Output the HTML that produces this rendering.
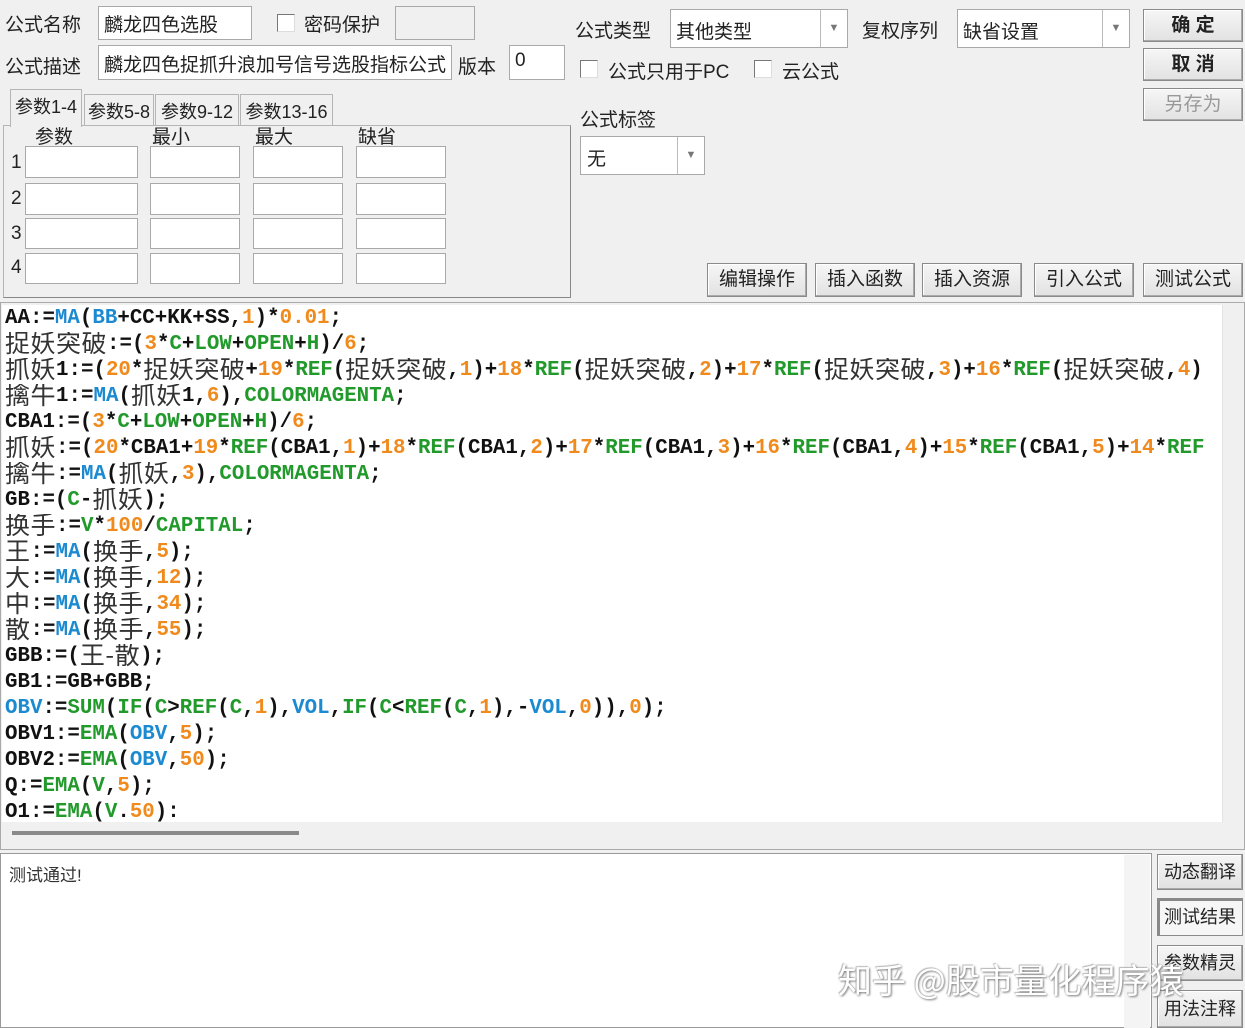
<!DOCTYPE html>
<html><head><meta charset="utf-8"><style>
*{box-sizing:border-box;margin:0;padding:0}
body{width:1245px;height:1028px;background:#f0f0f0;position:relative;overflow:hidden;font-family:"Liberation Sans","Noto Sans CJK SC",sans-serif;font-size:19px;color:#222}
.a{position:absolute;white-space:nowrap}
.in{position:absolute;background:#fff;border:1px solid #a9a9a9;white-space:nowrap}
.dis{background:#f0f0f0}
.cb{position:absolute;width:18px;height:18px;background:#fff;border:1px solid #777;border-right-color:#ddd;border-bottom-color:#ddd}
.btn{position:absolute;background:linear-gradient(#f6f6f6,#e2e2e2);border:1px solid #8a8a8a;box-shadow:inset -1px -1px 0 #aaa,inset 1px 1px 0 #fff;text-align:center;font-size:19px;color:#222;white-space:nowrap}
.dd{position:absolute;right:0;top:0;bottom:0;width:27px;border-left:1px solid #bbb;color:#777;font-size:11px;text-align:center}
.code{position:absolute;left:5px;display:flex;align-items:flex-start;font-family:"Liberation Mono",monospace;font-weight:bold;font-size:20.8px;line-height:26px;height:26px;white-space:pre;color:#111;overflow:hidden}
.code span{flex:none;line-height:26px;height:26px}
.b{color:#1c8ad0}.g{color:#219a2b}.o{color:#f08a1c}
.code .z{font-family:"Noto Sans CJK SC",sans-serif;font-weight:normal;font-size:25px;color:#333;letter-spacing:0.5px;position:relative;top:-3px}
.tab{position:absolute;top:92px;height:32px;border:1px solid #b5b5b5;border-bottom:none;font-size:18px;padding:3px 3px;white-space:nowrap;text-align:center}
</style></head><body>
<div class="a" style="left:5px;top:10px">公式名称</div>
<div class="in" style="left:98px;top:6px;width:154px;height:34px;padding:3px 5px">麟龙四色选股</div>
<div class="cb" style="left:277px;top:14px"></div>
<div class="a" style="left:304px;top:10px">密码保护</div>
<div class="in dis" style="top:6px;height:34px;left:395px;width:80px"></div>
<div class="a" style="left:5px;top:52px">公式描述</div>
<div class="in" style="left:98px;top:45px;width:354px;height:35px;padding:4px 5px;overflow:hidden">麟龙四色捉抓升浪加号信号选股指标公式</div>
<div class="a" style="left:458px;top:52px">版本</div>
<div class="in" style="left:509px;top:45px;width:56px;height:35px;padding:4px 5px">0</div>

<div class="tab" style="left:10px;width:72px;top:89px;height:38px;background:#f0f0f0;z-index:2">参数1-4</div>
<div class="tab" style="left:84px;width:70px;top:94px">参数5-8</div>
<div class="tab" style="left:155px;width:84px;top:94px">参数9-12</div>
<div class="tab" style="left:240px;width:93px;top:94px">参数13-16</div>
<div style="position:absolute;left:3px;top:125px;width:568px;height:173px;border:1px solid #b5b5b5;border-right-color:#888;border-bottom-color:#888"></div>
<div class="a" style="left:35px;top:122px">参数</div>
<div class="a" style="left:152px;top:122px">最小</div>
<div class="a" style="left:255px;top:122px">最大</div>
<div class="a" style="left:358px;top:122px">缺省</div>
<div class="a" style="left:11px;top:152px">1</div><div class="a" style="left:11px;top:188px">2</div><div class="a" style="left:11px;top:223px">3</div><div class="a" style="left:11px;top:257px">4</div>
<div class="in" style="left:25px;top:146px;width:113px;height:32px"></div><div class="in" style="left:150px;top:146px;width:90px;height:32px"></div><div class="in" style="left:253px;top:146px;width:90px;height:32px"></div><div class="in" style="left:356px;top:146px;width:90px;height:32px"></div>
<div class="in" style="left:25px;top:183px;width:113px;height:32px"></div><div class="in" style="left:150px;top:183px;width:90px;height:32px"></div><div class="in" style="left:253px;top:183px;width:90px;height:32px"></div><div class="in" style="left:356px;top:183px;width:90px;height:32px"></div>
<div class="in" style="left:25px;top:218px;width:113px;height:31px"></div><div class="in" style="left:150px;top:218px;width:90px;height:31px"></div><div class="in" style="left:253px;top:218px;width:90px;height:31px"></div><div class="in" style="left:356px;top:218px;width:90px;height:31px"></div>
<div class="in" style="left:25px;top:253px;width:113px;height:31px"></div><div class="in" style="left:150px;top:253px;width:90px;height:31px"></div><div class="in" style="left:253px;top:253px;width:90px;height:31px"></div><div class="in" style="left:356px;top:253px;width:90px;height:31px"></div>

<div class="a" style="left:575px;top:16px">公式类型</div>
<div class="in" style="left:670px;top:9px;width:178px;height:39px;padding:7px 5px">其他类型<div class="dd" style="line-height:37px">▼</div></div>
<div class="a" style="left:862px;top:16px">复权序列</div>
<div class="in" style="left:957px;top:9px;width:173px;height:39px;padding:7px 5px">缺省设置<div class="dd" style="line-height:37px">▼</div></div>
<div class="btn" style="left:1143px;top:9px;width:100px;height:33px;line-height:31px;font-weight:bold">确 定</div>
<div class="btn" style="left:1143px;top:48px;width:100px;height:33px;line-height:31px;font-weight:bold">取 消</div>
<div class="btn" style="left:1143px;top:88px;width:100px;height:33px;line-height:31px;color:#999">另存为</div>
<div class="cb" style="left:580px;top:60px"></div>
<div class="a" style="left:608px;top:57px">公式只用于PC</div>
<div class="cb" style="left:754px;top:60px"></div>
<div class="a" style="left:782px;top:57px">云公式</div>
<div class="a" style="left:580px;top:105px">公式标签</div>
<div class="in" style="left:580px;top:136px;width:125px;height:39px;padding:7px 6px">无<div class="dd" style="line-height:37px">▼</div></div>
<div class="btn" style="left:707px;top:263px;width:100px;height:34px;line-height:32px">编辑操作</div>
<div class="btn" style="left:815px;top:263px;width:100px;height:34px;line-height:32px">插入函数</div>
<div class="btn" style="left:922px;top:263px;width:100px;height:34px;line-height:32px">插入资源</div>
<div class="btn" style="left:1034px;top:263px;width:100px;height:34px;line-height:32px">引入公式</div>
<div class="btn" style="left:1143px;top:263px;width:100px;height:34px;line-height:32px">测试公式</div>

<div style="position:absolute;left:0;top:302px;width:1245px;height:548px;border:1px solid #aaa;background:#f0f0f0"></div>
<div style="position:absolute;left:2px;top:305px;width:1220px;height:517px;background:#fff;overflow:hidden">
<div class="code" style="top:1px;left:3px">AA:=<span class="b">MA</span>(<span class="b">BB</span>+CC+KK+SS,<span class="o">1</span>)*<span class="o">0.01</span>;</div>
<div class="code" style="top:27px;left:3px"><span class="z">捉妖突破</span>:=(<span class="o">3</span>*<span class="g">C</span>+<span class="g">LOW</span>+<span class="g">OPEN</span>+<span class="g">H</span>)/<span class="o">6</span>;</div>
<div class="code" style="top:53px;left:3px"><span class="z">抓妖</span>1:=(<span class="o">20</span>*<span class="z">捉妖突破</span>+<span class="o">19</span>*<span class="g">REF</span>(<span class="z">捉妖突破</span>,<span class="o">1</span>)+<span class="o">18</span>*<span class="g">REF</span>(<span class="z">捉妖突破</span>,<span class="o">2</span>)+<span class="o">17</span>*<span class="g">REF</span>(<span class="z">捉妖突破</span>,<span class="o">3</span>)+<span class="o">16</span>*<span class="g">REF</span>(<span class="z">捉妖突破</span>,<span class="o">4</span>)</div>
<div class="code" style="top:79px;left:3px"><span class="z">擒牛</span>1:=<span class="b">MA</span>(<span class="z">抓妖</span>1,<span class="o">6</span>),<span class="g">COLORMAGENTA</span>;</div>
<div class="code" style="top:105px;left:3px">CBA1:=(<span class="o">3</span>*<span class="g">C</span>+<span class="g">LOW</span>+<span class="g">OPEN</span>+<span class="g">H</span>)/<span class="o">6</span>;</div>
<div class="code" style="top:131px;left:3px"><span class="z">抓妖</span>:=(<span class="o">20</span>*CBA1+<span class="o">19</span>*<span class="g">REF</span>(CBA1,<span class="o">1</span>)+<span class="o">18</span>*<span class="g">REF</span>(CBA1,<span class="o">2</span>)+<span class="o">17</span>*<span class="g">REF</span>(CBA1,<span class="o">3</span>)+<span class="o">16</span>*<span class="g">REF</span>(CBA1,<span class="o">4</span>)+<span class="o">15</span>*<span class="g">REF</span>(CBA1,<span class="o">5</span>)+<span class="o">14</span>*<span class="g">REF</span></div>
<div class="code" style="top:157px;left:3px"><span class="z">擒牛</span>:=<span class="b">MA</span>(<span class="z">抓妖</span>,<span class="o">3</span>),<span class="g">COLORMAGENTA</span>;</div>
<div class="code" style="top:183px;left:3px">GB:=(<span class="g">C</span>-<span class="z">抓妖</span>);</div>
<div class="code" style="top:209px;left:3px"><span class="z">换手</span>:=<span class="g">V</span>*<span class="o">100</span>/<span class="g">CAPITAL</span>;</div>
<div class="code" style="top:235px;left:3px"><span class="z">王</span>:=<span class="b">MA</span>(<span class="z">换手</span>,<span class="o">5</span>);</div>
<div class="code" style="top:261px;left:3px"><span class="z">大</span>:=<span class="b">MA</span>(<span class="z">换手</span>,<span class="o">12</span>);</div>
<div class="code" style="top:287px;left:3px"><span class="z">中</span>:=<span class="b">MA</span>(<span class="z">换手</span>,<span class="o">34</span>);</div>
<div class="code" style="top:313px;left:3px"><span class="z">散</span>:=<span class="b">MA</span>(<span class="z">换手</span>,<span class="o">55</span>);</div>
<div class="code" style="top:339px;left:3px">GBB:=(<span class="z">王-散</span>);</div>
<div class="code" style="top:365px;left:3px">GB1:=GB+GBB;</div>
<div class="code" style="top:391px;left:3px"><span class="b">OBV</span>:=<span class="g">SUM</span>(<span class="g">IF</span>(<span class="g">C</span>&gt;<span class="g">REF</span>(<span class="g">C</span>,<span class="o">1</span>),<span class="b">VOL</span>,<span class="g">IF</span>(<span class="g">C</span>&lt;<span class="g">REF</span>(<span class="g">C</span>,<span class="o">1</span>),-<span class="b">VOL</span>,<span class="o">0</span>)),<span class="o">0</span>);</div>
<div class="code" style="top:417px;left:3px">OBV1:=<span class="g">EMA</span>(<span class="b">OBV</span>,<span class="o">5</span>);</div>
<div class="code" style="top:443px;left:3px">OBV2:=<span class="g">EMA</span>(<span class="b">OBV</span>,<span class="o">50</span>);</div>
<div class="code" style="top:469px;left:3px">Q:=<span class="g">EMA</span>(<span class="g">V</span>,<span class="o">5</span>);</div>
<div class="code" style="top:495px;left:3px;height:22px">O1:=<span class="g">EMA</span>(<span class="g">V</span>.<span class="o">50</span>):</div>
</div>
<div style="position:absolute;left:1222px;top:305px;width:21px;height:517px;background:#f0f0f0;border-left:1px solid #e4e4e4"></div>
<div style="position:absolute;left:12px;top:831px;width:287px;height:4px;background:#8a8a8a"></div>

<div style="position:absolute;left:0;top:853px;width:1152px;height:175px;background:#fff;border:1px solid #999"></div>
<div class="a" style="left:9px;top:861px;font-size:17px;color:#333">测试通过!</div>
<div style="position:absolute;left:1124px;top:855px;width:26px;height:173px;background:#f4f4f4"></div>
<div class="btn" style="left:1157px;top:854px;width:86px;height:36px;line-height:34px;font-size:18px">动态翻译</div>
<div class="btn" style="left:1157px;top:898px;width:86px;height:38px;line-height:36px;font-size:18px;background:#f6f6f6;box-shadow:inset 2px 2px 0 #888">测试结果</div>
<div class="btn" style="left:1157px;top:945px;width:86px;height:36px;line-height:34px;font-size:18px">参数精灵</div>
<div class="btn" style="left:1157px;top:990px;width:86px;height:38px;line-height:36px;font-size:18px">用法注释</div>
<div class="a" style="left:838px;top:954px;font-size:34px;color:#fff;font-family:'Noto Sans CJK SC',sans-serif;text-shadow:1px 1px 2px #777,-1px -1px 1px #bbb">知乎 @股市量化程序猿</div>
</body></html>
